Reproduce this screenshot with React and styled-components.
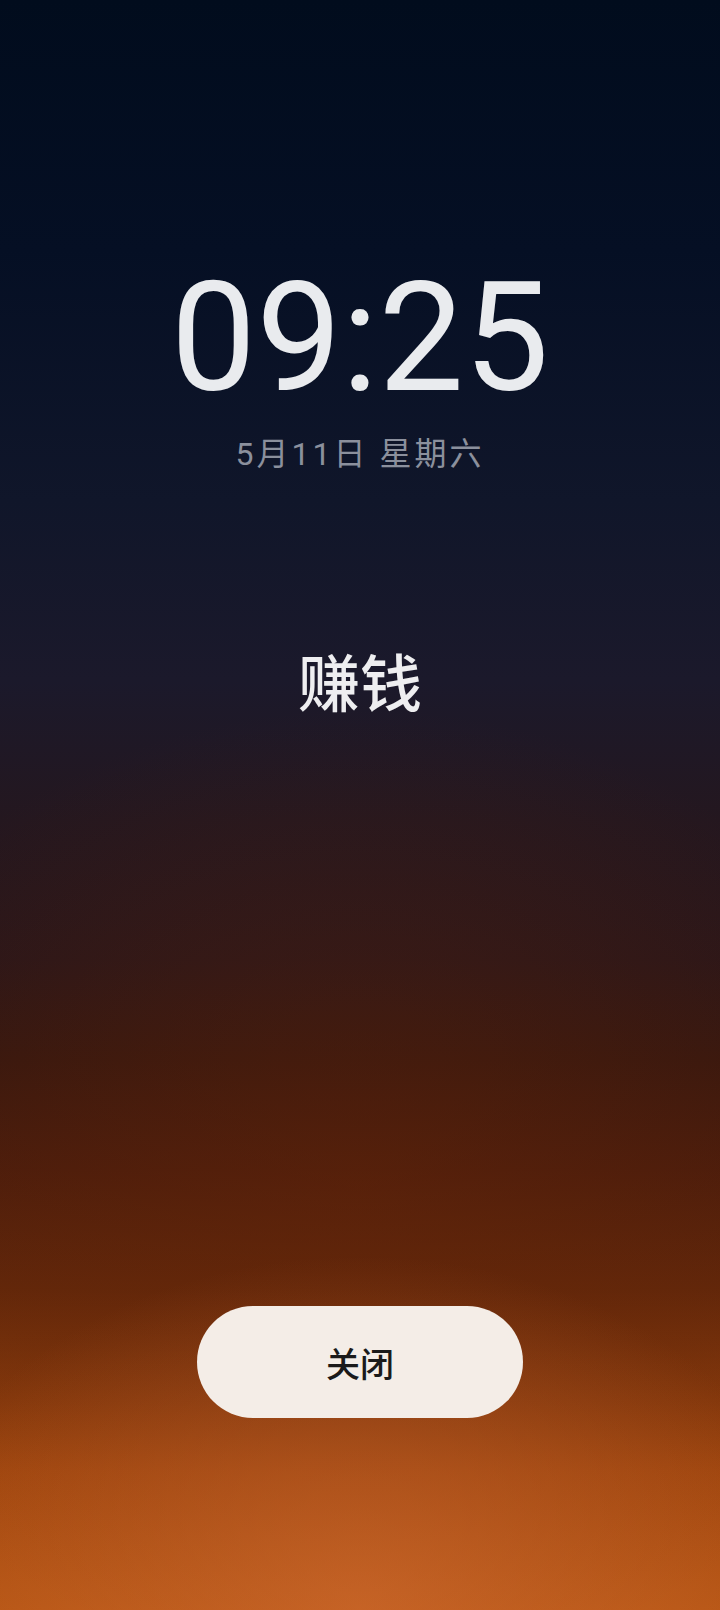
import { createGlobalStyle, styled } from "styled-components";

const Global = createGlobalStyle`
  html, body {
    margin: 0;
    padding: 0;
    background: #010c1d;
  }
  body {
    font-family: Roboto, "Noto Sans CJK SC", sans-serif;
  }
`;

const Screen = styled.div`
  width: 720px;
  height: 1610px;
  display: flex;
  flex-direction: column;
  align-items: center;
  overflow: hidden;
  background-image:
    radial-gradient(ellipse 65% 22% at 50% 100%, rgba(212, 110, 50, 0.6) 0%, rgba(212, 110, 50, 0) 100%),
    radial-gradient(ellipse 80% 30% at 50% 74%, rgba(104, 38, 8, 0.4) 0%, rgba(104, 38, 8, 0) 100%),
    linear-gradient(
      to bottom,
      #010c1d 0px,
      #050f24 250px,
      #10162a 500px,
      #1b192b 680px,
      #24171f 820px,
      #2a1619 960px,
      #36170f 1060px,
      #4a1c0c 1170px,
      #62270a 1290px,
      #86390c 1400px,
      #a0460e 1470px,
      #b55514 1610px
    );
`;

const Clock = styled.div`
  margin-top: 262px;
  font-family: Roboto, sans-serif;
  font-size: 152px;
  line-height: 1;
  font-weight: 400;
  color: #e9ebee;
`;

const DateLine = styled.div`
  margin-top: 24px;
  font-family: Roboto, "Noto Sans CJK SC", sans-serif;
  font-size: 32px;
  line-height: 1;
  letter-spacing: 3px;
  color: #8b909d;
`;

const Label = styled.div`
  margin-top: 179px;
  font-family: "Noto Sans CJK SC", sans-serif;
  font-size: 62px;
  font-weight: 500;
  line-height: 1;
  color: #eeeef0;
`;

const CloseButton = styled.button`
  margin-top: auto;
  margin-bottom: 192px;
  width: 326px;
  height: 112px;
  border: none;
  border-radius: 56px;
  background: #f4ede7;
  color: #1b1a1a;
  font-family: "Noto Sans CJK SC", sans-serif;
  font-size: 34px;
  font-weight: 500;
  cursor: pointer;
`;

const App = () => {
  return (
    <>
      <Global />
      <Screen>
        <Clock>09:25</Clock>
        <DateLine>5月11日 星期六</DateLine>
        <Label>赚钱</Label>
        <CloseButton>关闭</CloseButton>
      </Screen>
    </>
  );
};

export default App;
